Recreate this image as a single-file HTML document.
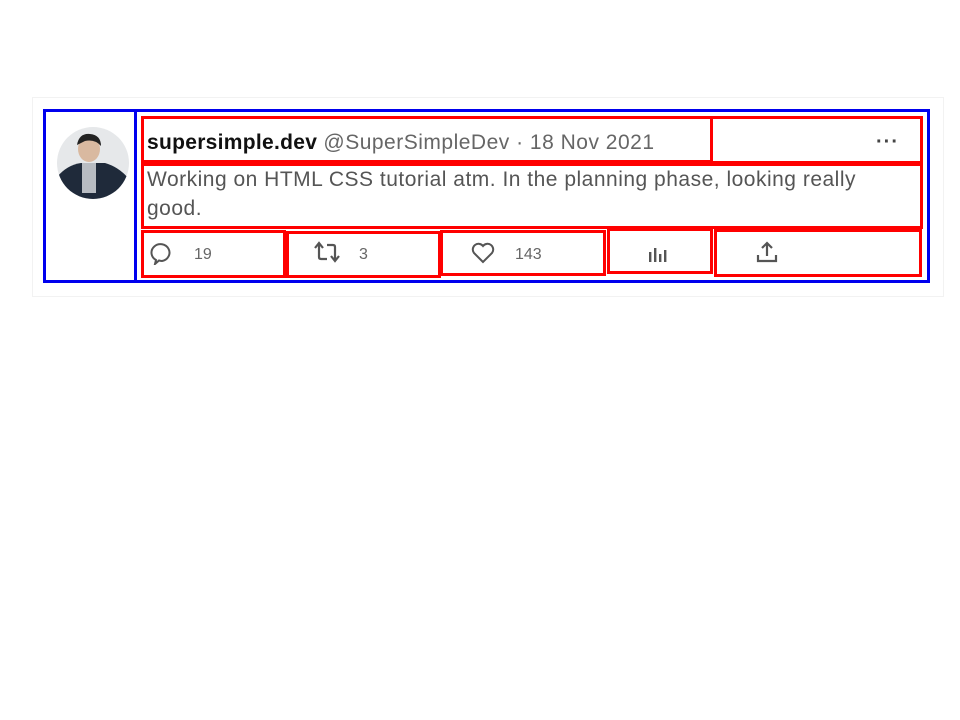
<!DOCTYPE html>
<html><head><style>
body{margin:0;width:960px;height:720px;background:#fff;position:relative;overflow:hidden;font-family:"Liberation Sans",Arial,sans-serif}
.a{position:absolute;box-sizing:border-box}
.r{border:3px solid #f00}
.t{position:absolute;white-space:nowrap;color:#555;font-size:21px;letter-spacing:0.5px}
.n{position:absolute;font-size:16px;color:#666}
</style></head><body>
<div class="a" style="left:32px;top:97px;width:912px;height:200px;border:1px solid #f2f2f2"></div>
<div class="a" style="left:43px;top:109px;width:887px;height:174px;border:3px solid #0000ee"></div>
<div class="a" style="left:134px;top:110px;width:3px;height:172px;background:#0000ee"></div>
<svg class="a" style="left:57px;top:127px" width="72" height="72" viewBox="0 0 72 72">
<defs><clipPath id="c"><circle cx="36" cy="36" r="36"/></clipPath></defs>
<g clip-path="url(#c)">
<rect width="72" height="72" fill="#e6e8ea"/>
<path d="M0 50 Q10 38 24 36 L48 36 Q62 40 72 52 L72 72 L0 72Z" fill="#1f2a3a"/>
<rect x="25" y="36" width="14" height="30" fill="#b8bcc2"/>
<ellipse cx="32" cy="22" rx="11" ry="13" fill="#d9b9a0"/>
<path d="M20 18 Q22 6 33 7 Q44 8 44 19 Q38 12 28 14 Z" fill="#222"/>
</g></svg>
<div class="a r" style="left:141px;top:116px;width:572px;height:47px"></div>
<div class="a r" style="left:710px;top:116px;width:213px;height:48px"></div>
<div class="a r" style="left:141px;top:163px;width:782px;height:66px"></div>
<div class="a r" style="left:141px;top:230px;width:145px;height:48px"></div>
<div class="a r" style="left:286px;top:231px;width:155px;height:47px"></div>
<div class="a r" style="left:440px;top:230px;width:166px;height:46px"></div>
<div class="a r" style="left:607px;top:228px;width:106px;height:46px"></div>
<div class="a r" style="left:714px;top:229px;width:208px;height:48px"></div>
<div class="t" style="left:147px;top:131px;color:#111;font-weight:bold;letter-spacing:0.3px">supersimple.dev <span style="font-weight:normal;color:#666;letter-spacing:0.5px">@SuperSimpleDev · 18 Nov 2021</span></div>
<div class="t" style="left:876px;top:131px;color:#444;font-weight:bold;letter-spacing:1px;font-size:20px">···</div>
<div class="t" style="left:147px;top:165px;line-height:29px">Working on HTML CSS tutorial atm. In the planning phase, looking really<br>good.</div>
<svg class="a" style="left:149px;top:241px" width="24" height="24" viewBox="0 0 24 24" fill="none" stroke="#555" stroke-width="2"><path d="M7 19 L6 23 L10 19.5 Q12 20 13 20 A9 8.5 0 1 0 7 19Z"/></svg>
<div class="n" style="left:194px;top:246px">19</div>
<svg class="a" style="left:313px;top:241px" width="28" height="22" viewBox="0 0 28 22" fill="none" stroke="#555" stroke-width="2.2"><path d="M2 7 L6 2 L10 7 M6 2 V16 Q6 18 8 18 H14"/><path d="M26 15 L22 20 L18 15 M22 20 V6 Q22 4 20 4 H14"/></svg>
<div class="n" style="left:359px;top:246px">3</div>
<svg class="a" style="left:470px;top:242px" width="26" height="22" viewBox="0 0 26 22" fill="none" stroke="#555" stroke-width="2"><path d="M13 20 L4 11 A5 5 0 0 1 13 4 A5 5 0 0 1 22 11 Z"/></svg>
<div class="n" style="left:515px;top:246px">143</div>
<svg class="a" style="left:647px;top:242px" width="22" height="22" viewBox="0 0 22 22" fill="#555"><rect x="2" y="10" width="2.4" height="10"/><rect x="7" y="6" width="2.4" height="14"/><rect x="12" y="12" width="2.4" height="8"/><rect x="17" y="8" width="2.4" height="12"/></svg>
<svg class="a" style="left:755px;top:240px" width="24" height="24" viewBox="0 0 24 24" fill="none" stroke="#555" stroke-width="2.2"><path d="M12 16 V3 M7 8 L12 3 L17 8 M3 15 V21 H21 V15"/></svg>
</body></html>
